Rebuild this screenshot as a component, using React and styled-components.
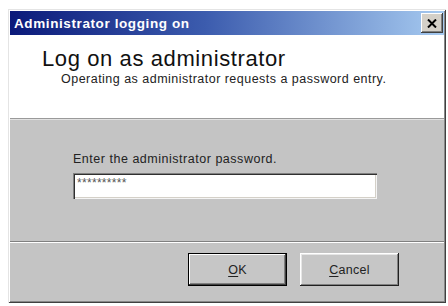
import React from "react";
import styled, { createGlobalStyle } from "styled-components";

const GlobalStyle = createGlobalStyle`
  body {
    margin: 0;
    background: #fff;
    font-family: "Liberation Sans", Arial, sans-serif;
  }
`;

const Window = styled.div`
  margin: 9px 0 0 8px;
  width: 438px;
  height: 294px;
  box-sizing: border-box;
  padding: 2px;
  background: #c4c4c4;
  display: flex;
  flex-direction: column;
  box-shadow: inset 1px 1px #e4e4e4, inset -1px -1px #404040,
    inset 2px 2px #ffffff, inset -2px -2px #888888;
`;

const TitleBar = styled.div`
  height: 24px;
  flex: none;
  display: flex;
  align-items: center;
  justify-content: space-between;
  padding: 0 1px 0 4px;
  background: linear-gradient(to right, #0b1a7a 0%, #3c5cae 45%, #a6caf0 100%);
`;

const TitleText = styled.span`
  color: #fff;
  font-weight: bold;
  font-size: 13.5px;
  letter-spacing: 0.6px;
`;

const CloseButton = styled.button`
  width: 22px;
  height: 20px;
  padding: 0;
  border: none;
  background: #d4d0c8;
  display: flex;
  align-items: center;
  justify-content: center;
  box-shadow: inset -1px -1px #404040, inset 1px 1px #ffffff,
    inset -2px -2px #808080;
`;

const Header = styled.div`
  height: 84px;
  flex: none;
  box-sizing: border-box;
  background: #fff;
  padding: 13px 0 0 32px;
  border-bottom: 1px solid #9a9a9a;
`;

const Heading = styled.div`
  font-size: 22px;
  line-height: 21px;
  letter-spacing: 0.6px;
  color: #111;
`;

const SubHeading = styled.div`
  margin: 4px 0 0 19px;
  font-size: 12.5px;
  line-height: 13px;
  letter-spacing: 0.48px;
  color: #222;
`;

const Body = styled.div`
  height: 122px;
  flex: none;
  box-sizing: border-box;
  padding: 33px 0 0 63px;
  border-top: 1px solid #e2e2e2;
`;

const Label = styled.div`
  font-size: 12.5px;
  line-height: 13px;
  letter-spacing: 0.52px;
  color: #222;
`;

const PasswordBox = styled.div`
  margin-top: 7px;
  width: 304px;
  height: 26px;
  box-sizing: border-box;
  background: #fff;
  padding: 4px 0 0 4px;
  font-size: 12px;
  line-height: 12px;
  color: #555;
  letter-spacing: 0.3px;
  box-shadow: inset 1px 1px #808080, inset 2px 2px #303030,
    inset -1px -1px #f4f4f4, inset -2px -2px #d4d0c8;
`;

const Separator = styled.div`
  height: 0;
  border-top: 1px solid #808080;
  border-bottom: 1px solid #fff;
`;

const Footer = styled.div`
  flex: 1;
  display: flex;
  justify-content: flex-end;
  align-items: flex-start;
  gap: 13px;
  padding: 10px 45px 0 0;
`;

const Button = styled.button`
  width: 99px;
  height: 33px;
  padding: 0;
  border: ${(p) => (p.primary ? "1px solid #000" : "none")};
  background: #c6c6c6;
  font-family: "Liberation Sans", Arial, sans-serif;
  font-size: 12.5px;
  letter-spacing: 0.3px;
  color: #222;
  box-shadow: ${(p) =>
    p.primary
      ? "inset -1px -1px #404040, inset 1px 1px #ffffff, inset -2px -2px #808080"
      : "inset -1px -1px #202020, inset 1px 1px #ffffff, inset -2px -2px #808080, inset 2px 2px #e6e6e6"};

  u {
    text-decoration: underline;
    text-underline-offset: 2px;
  }
`;

export default function App() {
  return (
    <>
      <GlobalStyle />
      <Window>
        <TitleBar>
          <TitleText>Administrator logging on</TitleText>
          <CloseButton aria-label="Close">
            <svg width="10" height="9" viewBox="0 0 10 9">
              <path d="M1 0.5 L9 8.5 M9 0.5 L1 8.5" stroke="#000" strokeWidth="2" />
            </svg>
          </CloseButton>
        </TitleBar>
        <Header>
          <Heading>Log on as administrator</Heading>
          <SubHeading>Operating as administrator requests a password entry.</SubHeading>
        </Header>
        <Body>
          <Label>Enter the administrator password.</Label>
          <PasswordBox>**********</PasswordBox>
        </Body>
        <Separator />
        <Footer>
          <Button primary>
            <u>O</u>K
          </Button>
          <Button>
            <u>C</u>ancel
          </Button>
        </Footer>
      </Window>
    </>
  );
}
